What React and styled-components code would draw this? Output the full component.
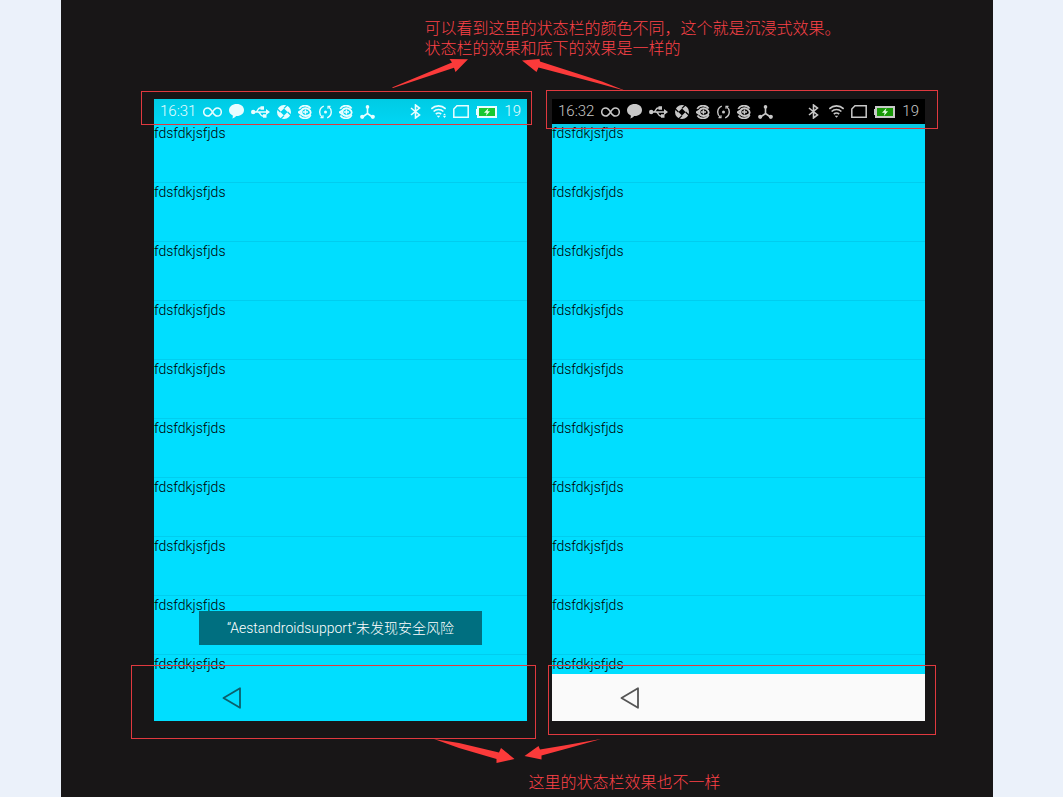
import React from "react";
import styled, { createGlobalStyle } from "styled-components";

const Global = createGlobalStyle`
  * { box-sizing: border-box; }
  body { margin: 0; background: #ebf1fa; font-family: Roboto, "Noto Sans CJK SC", sans-serif; }
`;

const Page = styled.div`
  min-height: 100vh;
  padding: 0 70px 0 61px;
  display: flex;
`;

const Stage = styled.main`
  flex: 1;
  padding: 19px 68px 3px 93px;
  background: #181617;
`;

const Note = styled.p`
  margin: 0 0 0 calc(50% - ${(p) => p.$shift}px);
  color: #ff4248;
  font-family: "Liberation Sans", "Noto Sans CJK SC", sans-serif;
  font-weight: 300;
  font-size: 16px;
  line-height: 20px;
  white-space: nowrap;
`;

const NoteLine = styled.span`
  display: block;
  height: 20px;
`;

const Arrows = styled.svg`
  display: block;
  position: relative;
  z-index: 2;
  margin-left: calc(50% - ${(p) => p.$shift}px);
  fill: #fb3a3a;
`;

const Phones = styled.div`
  display: grid;
  grid-template-columns: 1fr 1fr;
  gap: 25px;
  margin: 7px 0 18px;
`;

const Phone = styled.section`
  position: relative;
  display: flex;
  flex-direction: column;
  height: 622px;
  background: #00deff;
`;

const StatusBar = styled.header`
  display: flex;
  justify-content: space-between;
  flex: none;
  height: 25px;
  padding: 0 6px;
  background: ${(p) => (p.$dark ? "#000" : "linear-gradient(#00cbe4, #00d6f4)")};
  color: ${(p) => (p.$dark ? "#c8c8c8" : "#e8fdff")};
`;

const StatusGroup = styled.div`
  display: flex;
  align-items: center;
  gap: 7px;
  svg { display: block; flex: none; }
`;

const StatusText = styled.span`
  font-size: 15px;
  line-height: 25px;
  font-weight: 300;
`;

const Rows = styled.ul`
  flex: 1;
  min-height: 0;
  overflow: hidden;
  margin: 0;
  padding: 0;
  list-style: none;
  background: ${(p) => (p.$shaded ? "linear-gradient(#0ac8e4 5px, transparent 5px)" : "none")};
`;

const Row = styled.li`
  height: 59px;
  border-bottom: 1px solid #00cdef;
  color: #000;
  font-size: 14px;
  font-weight: 300;
  line-height: 19px;
`;

const NavBar = styled.nav`
  flex: none;
  height: 47px;
  padding-left: 68px;
  display: flex;
  align-items: center;
  background: ${(p) => (p.$light ? "#fafafa" : "transparent")};
  color: ${(p) => (p.$light ? "#555" : "#0b5f6c")};
`;

const BackButton = styled.button`
  display: block;
  padding: 0;
  border: 0;
  background: none;
  color: inherit;
  svg { display: block; }
`;

const Toast = styled.div`
  position: absolute;
  bottom: 76px;
  left: 0;
  right: 0;
  width: fit-content;
  margin: 0 auto;
  padding: 0 28px;
  background: #006f80;
  color: #fff;
  font-size: 14px;
  font-weight: 300;
  line-height: 34px;
  white-space: nowrap;
`;

const Frame = styled.div`
  position: absolute;
  z-index: 1;
  top: ${(p) => p.$top}px;
  left: ${(p) => p.$left}px;
  right: ${(p) => p.$right}px;
  height: ${(p) => p.$height}px;
  border: 1px solid #e0393f;
  pointer-events: none;
`;

const Infinity = () => (
  <svg width="19" height="10" viewBox="0 0 19 10" fill="none" stroke="currentColor" strokeWidth="1.5">
    <path d="M9.5 5C8 2.5 6.800.9 4.800.9a4.100 4.100 0 0 0 0 8.200C6.800 9.100 8 7.500 9.500 5s2.700-4.100 4.700-4.100a4.100 4.100 0 0 1 0 8.200C12.200 9.100 11 7.500 9.500 5z" />
  </svg>
);

const Chat = () => (
  <svg width="15" height="15" viewBox="0 0 15 15" fill="currentColor">
    <path d="M7.700 0C12 0 15 2.600 15 6s-3 6.100-7.300 6.100H7.200C6.300 13.200 5 14.200 3.200 14.600c.6-1 .8-2 .6-3.200C1.500 10.500 0 8.500 0 6.200 0 2.700 3.400 0 7.700 0z" />
  </svg>
);

const Usb = () => (
  <svg width="19" height="12" viewBox="0 0 19 12" fill="none" stroke="currentColor" strokeWidth="1.5">
    <path d="M2 6h14M4.500 6C7 6 6.500 2 9 2h2M7 6c2.500 0 2 4 4.500 4h2" />
    <circle cx="2.200" cy="6" r="2.200" fill="currentColor" stroke="none" />
    <path d="M15 3 19 6l-4 3zM9.500 .3h3.500v3.400H9.500zM12 8.300h3.500v3.400H12z" fill="currentColor" stroke="none" />
  </svg>
);

const Shutter = () => (
  <svg width="14" height="14" viewBox="0 0 14 14">
    <mask id="shutter-blades">
      <circle cx="7" cy="7" r="7" fill="#fff" />
      <path d="M7 3.400 10.600 7 7 10.600 3.400 7z" fill="#000" />
      <path d="M3.400 7-4.100-.5M7 3.400 14.500-4.100M10.600 7 18.100 14.500M7 10.600-.5 18.100" stroke="#000" strokeWidth="1.200" />
    </mask>
    <rect width="14" height="14" fill="currentColor" mask="url(#shutter-blades)" />
  </svg>
);

const Orbit = () => (
  <svg width="14" height="14" viewBox="0 0 14 14" fill="none" stroke="currentColor">
    <path d="M1.200 3.800C3.500-.3 10-.5 12.600 3.500" strokeWidth="1.700" />
    <path d="M12.800 10.200C10.500 14.300 4 14.500 1.400 10.500" strokeWidth="1.700" />
    <path d="M11 4.600C8.500 2.200 3.600 3 3.200 7c0 3.500 4 5 7.600 3.200" strokeWidth="2" />
    <path d="M10.500 4.200C13.500 6 13.500 9 10.300 10.400M3.300 5.500.6 7.200l2.800 2" strokeWidth="1.800" />
    <path d="M4.800 7h5.200M7.400 4.400v5.200" strokeWidth="1.500" />
  </svg>
);

const Sync = () => (
  <svg width="13" height="14" viewBox="0 0 13 14" fill="none" stroke="currentColor" strokeWidth="1.400">
    <path d="M4.800 1.200C-.2 3-.4 9.500 3.200 12M8.200 12.800C13.200 11 13.400 4.500 9.800 2" />
    <path d="M1.500 12.600h2.500V10.300M11.500 1.400H9v2.300" strokeWidth="1.200" />
    <circle cx="6.500" cy="7" r="1.500" fill="currentColor" stroke="none" />
  </svg>
);

const Trident = () => (
  <svg width="15" height="14" viewBox="0 0 15 14" fill="currentColor">
    <path d="M7.500 2v6.500L2.500 12M7.500 8.500l5 3.500" fill="none" stroke="currentColor" strokeWidth="1.600" />
    <circle cx="7.500" cy="1.900" r="1.800" />
    <circle cx="2.200" cy="11.800" r="2.100" />
    <circle cx="12.800" cy="11.800" r="2.100" />
  </svg>
);

const Bluetooth = () => (
  <svg width="16" height="15" viewBox="0 0 16 15" fill="none" stroke="currentColor" strokeWidth="1.600">
    <path d="M3 4l8.500 7L7.500 14V1l4 3L3 11" />
  </svg>
);

const Wifi = ({ full }) => (
  <svg width="15" height="13" viewBox="0 0 15 13" fill="none" stroke="currentColor" strokeWidth="1.600">
    <path d="M.3 3.800a10.400 10.400 0 0 1 14.400 0M2.600 6.500a7 7 0 0 1 9.800 0M4.800 9.100a3.900 3.900 0 0 1 5.400 0" />
    <path d="M5.700 10.700h3.600L7.500 12.800z" fill="currentColor" stroke="none" />
    {!full && <path d="M12 11h3l-1.500 2zM12 10.300h3L13.500 8.500z" fill="currentColor" stroke="none" />}
  </svg>
);

const Sim = () => (
  <svg width="16" height="13" viewBox="0 0 16 13" fill="none" stroke="currentColor" strokeWidth="1.500">
    <path d="M4 .8h11.200v11.400H.8V4z" />
  </svg>
);

const Battery = ({ level }) => (
  <svg width="21" height="12" viewBox="0 0 21 12">
    <path d="M0 3h2v6H0z" fill="currentColor" />
    <rect x="2" y="1" width="18" height="10" fill={level} stroke="currentColor" strokeWidth="2" />
    <path d="M12.500 2 8 6.800h2.700L9.800 10 14 5.300h-2.500z" fill="#e8ffe8" />
  </svg>
);

const BackIcon = () => (
  <svg width="20" height="22" viewBox="0 0 20 22" fill="none" stroke="currentColor" strokeWidth="1.800" strokeLinejoin="round">
    <path d="M18 1.200v19.600L1.500 11z" />
  </svg>
);

const items = Array.from({ length: 10 }, () => "fdsfdkjsfjds");

function Device({ time, separateBars, toast, frames }) {
  return (
    <Phone>
      <StatusBar $dark={separateBars}>
        <StatusGroup>
          <StatusText>{time}</StatusText>
          <Infinity />
          <Chat />
          <Usb />
          <Shutter />
          <Orbit />
          <Sync />
          <Orbit />
          <Trident />
        </StatusGroup>
        <StatusGroup>
          <Bluetooth />
          <Wifi full={separateBars} />
          <Sim />
          <Battery level={separateBars ? "#189808" : "#18c832"} />
          <StatusText>19</StatusText>
        </StatusGroup>
      </StatusBar>
      <Rows $shaded={separateBars}>
        {items.map((text, i) => (
          <Row key={i}>{text}</Row>
        ))}
      </Rows>
      <NavBar $light={separateBars}>
        <BackButton type="button" aria-label="Back">
          <BackIcon />
        </BackButton>
      </NavBar>
      {toast && <Toast role="status">{toast}</Toast>}
      {frames.map((f) => (
        <Frame key={f.top} $top={f.top} $left={f.left} $right={f.right} $height={f.height} />
      ))}
    </Phone>
  );
}

const leftFrames = [
  { top: -8, left: -13, right: -5, height: 34 },
  { top: 566, left: -23, right: -9, height: 74 },
];
const rightFrames = [
  { top: -9, left: -6, right: -13, height: 39 },
  { top: 566, left: -4, right: -11, height: 70 },
];

export default function App() {
  return (
    <>
      <Global />
      <Page>
        <Stage>
          <Note $shift={115}>
            <NoteLine>可以看到这里的状态栏的颜色不同，这个就是沉浸式效果。</NoteLine>
            <NoteLine>状态栏的效果和底下的效果是一样的</NoteLine>
          </Note>
          <Arrows $shift={148} width="234" height="33" viewBox="0 1 234 33">
            <path d="M0 29.500 60 4.500 57.500 1 76 1.200 63.500 14 62 9.800 1 30z" />
            <path d="M130 2.500 147.500 1 148 3.500 210 23.500 234 33 205 25 146.500 9.500 144.500 14z" />
          </Arrows>
          <Phones>
            <Device
              time="16:31"
              toast="“Aestandroidsupport”未发现安全风险"
              frames={leftFrames}
            />
            <Device time="16:32" separateBars frames={rightFrames} />
          </Phones>
          <Arrows $shift={106} width="168" height="34" viewBox="0 0 168 34">
            <path d="M0 0 25 4 65 13.500 67 9 80.500 20 62.500 24 62.500 20 25 9z" />
            <path d="M167 0 130 6.500 106 10.500 104.500 7 90.500 17 107.500 20.500 107.500 16.500 135 9z" />
          </Arrows>
          <Note $shift={11}>这里的状态栏效果也不一样</Note>
        </Stage>
      </Page>
    </>
  );
}
